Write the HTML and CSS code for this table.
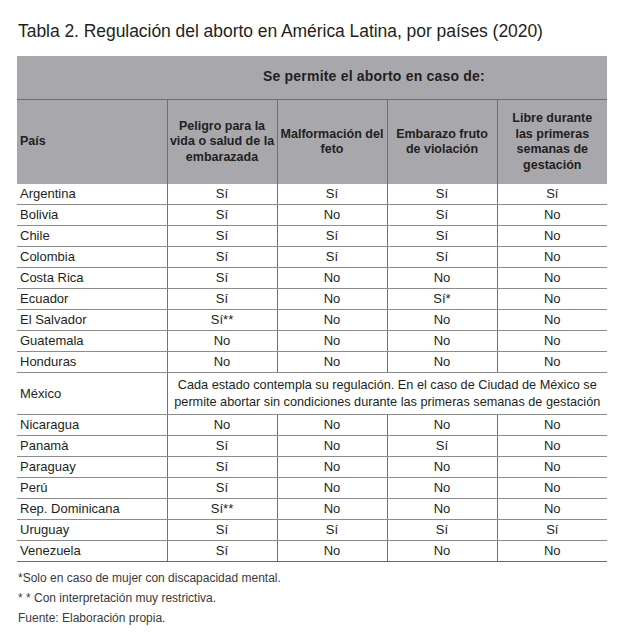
FILE: index.html
```html
<!DOCTYPE html>
<html lang="es">
<head>
<meta charset="utf-8">
<title>Tabla 2</title>
<link rel="stylesheet" href="styles.css">
</head>
<body>
<div class="page">
  <h1 class="title">Tabla 2. Regulación del aborto en América Latina, por países (2020)</h1>
  <table class="grid">
    <colgroup>
      <col class="c-country"><col class="c-val"><col class="c-val"><col class="c-val"><col class="c-val">
    </colgroup>
    <thead>
      <tr class="h1">
        <th class="blank"></th>
        <th colspan="4" class="span">Se permite el aborto en caso de:</th>
      </tr>
      <tr class="h2">
        <th class="left">País</th>
        <th>Peligro para la<br>vida o salud de la<br>embarazada</th>
        <th>Malformación del<br>feto</th>
        <th>Embarazo fruto<br>de violación</th>
        <th>Libre durante<br>las primeras<br>semanas de<br>gestación</th>
      </tr>
    </thead>
    <tbody>
      <tr><td>Argentina</td><td>Sí</td><td>Sí</td><td>Sí</td><td>Sí</td></tr>
      <tr><td>Bolivia</td><td>Sí</td><td>No</td><td>Sí</td><td>No</td></tr>
      <tr><td>Chile</td><td>Sí</td><td>Sí</td><td>Sí</td><td>No</td></tr>
      <tr><td>Colombia</td><td>Sí</td><td>Sí</td><td>Sí</td><td>No</td></tr>
      <tr><td>Costa Rica</td><td>Sí</td><td>No</td><td>No</td><td>No</td></tr>
      <tr><td>Ecuador</td><td>Sí</td><td>No</td><td>Sí*</td><td>No</td></tr>
      <tr><td>El Salvador</td><td>Sí**</td><td>No</td><td>No</td><td>No</td></tr>
      <tr><td>Guatemala</td><td>No</td><td>No</td><td>No</td><td>No</td></tr>
      <tr><td>Honduras</td><td>No</td><td>No</td><td>No</td><td>No</td></tr>
      <tr class="tall"><td>México</td><td colspan="4" class="note">Cada estado contempla su regulación. En el caso de Ciudad de México se<br>permite abortar sin condiciones durante las primeras semanas de gestación</td></tr>
      <tr><td>Nicaragua</td><td>No</td><td>No</td><td>No</td><td>No</td></tr>
      <tr><td>Panamà</td><td>Sí</td><td>No</td><td>Sí</td><td>No</td></tr>
      <tr><td>Paraguay</td><td>Sí</td><td>No</td><td>No</td><td>No</td></tr>
      <tr><td>Perú</td><td>Sí</td><td>No</td><td>No</td><td>No</td></tr>
      <tr><td>Rep. Dominicana</td><td>Sí**</td><td>No</td><td>No</td><td>No</td></tr>
      <tr><td>Uruguay</td><td>Sí</td><td>Sí</td><td>Sí</td><td>Sí</td></tr>
      <tr class="last"><td>Venezuela</td><td>Sí</td><td>No</td><td>No</td><td>No</td></tr>
    </tbody>
  </table>
  <div class="notes">
    <p>*Solo en caso de mujer con discapacidad mental.</p>
    <p>* * Con interpretación muy restrictiva.</p>
    <p>Fuente: Elaboración propia.</p>
  </div>
</div>
</body>
</html>
```
FILE: styles.css
```css
html, body {
  margin: 0;
  padding: 0;
  background: #ffffff;
}
body {
  font-family: "Liberation Sans", Arial, sans-serif;
  color: #231f20;
}
.page {
  padding: 17px 18px 0 17px;
}
.title {
  margin: 0 0 0 1px;
  font-weight: normal;
  font-size: 17.5px;
  line-height: 28px;
  height: 39px;
  color: #231f20;
  letter-spacing: -0.05px;
}
.grid {
  border-collapse: collapse;
  table-layout: fixed;
  width: 588px;
  font-size: 13px;
}
.c-country { width: 150px; }
.c-val { width: 110px; }
.grid th {
  background: #a8a7ac;
  font-weight: bold;
  font-size: 12.5px;
  line-height: 15.5px;
  color: #231f20;
  padding: 0;
  text-align: center;
  border-left: 1px solid #707070;
  white-space: nowrap;
}
.grid th:first-child { border-left: none; }
.h1 th {
  height: 41px;
  border-bottom: 1px solid #6e6e6e;
  vertical-align: middle;
}
.h1 .span {
  border-left: none;
  text-align: left;
  padding-left: 96px;
  padding-bottom: 2px;
  font-size: 14px;
  letter-spacing: 0.2px;
}
.h2 th {
  height: 84px;
  vertical-align: middle;
}
.h2 .left {
  text-align: left;
  padding-left: 3px;
}
.grid td {
  height: 20px;
  padding: 0;
  line-height: 20px;
  text-align: center;
  border-left: 1px solid #707070;
  border-bottom: 1px solid #8c8c8c;
  white-space: nowrap;
}
.grid td:first-child {
  border-left: none;
  text-align: left;
  padding-left: 3px;
}
.tall td {
  height: 41px;
  line-height: 17px;
}
.grid td.note {
  font-size: 12.7px;
  text-align: center;
  padding: 0;
}
.last td {
  border-bottom: 1.5px solid #6a6a6a;
}
.notes {
  margin-top: 6px;
  padding-left: 1px;
  font-size: 12px;
  color: #3a3a3a;
}
.notes p {
  margin: 0;
  line-height: 20px;
}
```
